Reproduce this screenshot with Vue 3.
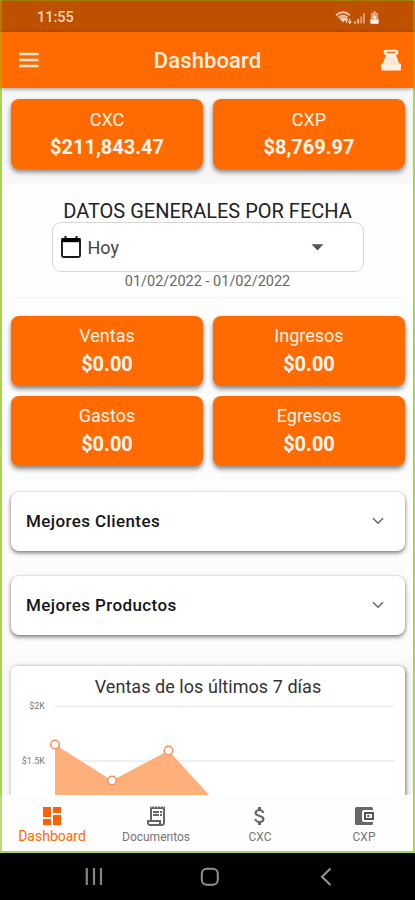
<script setup>
const totals = [
  { label: 'CXC', value: '$211,843.47' },
  { label: 'CXP', value: '$8,769.97' },
]
const periodTotals = [
  { label: 'Ventas', value: '$0.00' },
  { label: 'Ingresos', value: '$0.00' },
  { label: 'Gastos', value: '$0.00' },
  { label: 'Egresos', value: '$0.00' },
]
const panels = ['Mejores Clientes', 'Mejores Productos']
const points = [
  [44, 39.5],
  [101, 75.5],
  [157.5, 45.5],
]
</script>

<template>
  <div class="phone">
    <div class="screen">
      <div class="status">
        <span class="time">11:55</span>
        <svg class="signals" width="46" height="16" viewBox="0 0 46 16">
          <path d="M1 5.2Q8 -.8 15 5.2M3.2 7.6Q8 3.8 12.6 7.6" fill="none" stroke="#f0c3a8" stroke-width="1.8" />
          <path d="M4.5 8.4Q8 6 11.5 8.4L8 12.5Z" fill="#f5cdb5" />
          <path d="M11.5 13V9M10 10.5l1.5-2 1.5 2M14.8 8.5v4.3M13.3 11.3l1.5 2 1.5-2" fill="none" stroke="#f5cdb5" stroke-width="1.2" />
          <path d="M19 13.5v-2h2v2zM22.2 13.5V9.2h2v4.3z" fill="#f0c3a8" />
          <path d="M25.2 13.5v-7h2v7zM28 13.5V3.2h2v10.3z" fill="#db9a73" />
          <path d="M38 1.2h3v1.5h1.2q1 0 1 1v9q0 1-1 1h-5.400q-1 0-1-1v-9q0-1 1-1H38z" fill="#dc9d76" />
          <path d="M35.3 9.5h8.400v3.200q0 1-1 1h-6.400q-1 0-1-1z" fill="#fff0e5" />
          <path d="M40 3.800l-2.500 4h2l-.7 3 3-4h-2z" fill="#fff" />
        </svg>
      </div>

      <header class="appbar">
        <svg class="menu" width="20" height="16" viewBox="0 0 20 16">
          <path d="M0 2h19.5M0 8h19.5M0 14h19.5" stroke="#ffe9d7" stroke-width="2.3" />
        </svg>
        <h1>Dashboard</h1>
        <svg class="register" width="22" height="22" viewBox="0 0 22 22">
          <path fill-rule="evenodd" d="M5.500 .8h11q1.800 0 1.800 1.800v1.600Q18.300 6 16.500 6h-.6l3.400 9H2.700l3.400-9h-.6Q3.700 6 3.700 4.200V2.600Q3.700 .8 5.500 .8zM6.500 2.800v1.200h9V2.800z" fill="#fff0e3" />
          <path d="M2 14.500h18q1 0 1 1v5q0 1-1 1H2q-1 0-1-1v-5q0-1 1-1z" fill="#fff0e3" />
          <path d="M8.500 8.500l-.8 7M13.500 8.500l.8 7M11 10v4.500h2" stroke="#ffd0ac" stroke-width=".9" fill="none" />
        </svg>
      </header>

      <main>
        <section class="tiles">
          <div v-for="t in totals" :key="t.label" class="tile">
            <span class="label">{{ t.label }}</span>
            <strong>{{ t.value }}</strong>
          </div>
        </section>

        <section class="period">
          <h2>DATOS GENERALES POR FECHA</h2>
          <div class="select">
            <svg width="22" height="24" viewBox="0 0 22 24">
              <path d="M5.500 1v4M16.500 1v4" stroke="#1a1a1a" stroke-width="2" />
              <rect x="2" y="4" width="18" height="18" rx="1.500" fill="none" stroke="#1a1a1a" stroke-width="1.900" />
              <path d="M1.500 3.200h19v4h-19z" fill="#000" />
            </svg>
            <span class="choice">Hoy</span>
            <svg class="arrow" width="13" height="7" viewBox="0 0 13 7">
              <path d="M.5 .3h12L6.500 6.500z" fill="#555" />
            </svg>
          </div>
          <p>01/02/2022 - 01/02/2022</p>
        </section>

        <section class="tiles period-tiles">
          <div v-for="t in periodTotals" :key="t.label" class="tile">
            <span class="label">{{ t.label }}</span>
            <strong>{{ t.value }}</strong>
          </div>
        </section>

        <section class="panels">
          <div v-for="p in panels" :key="p" class="panel">
            <span>{{ p }}</span>
            <svg width="12" height="8" viewBox="0 0 12 8">
              <path d="M1 1.200l5 5 5-5" fill="none" stroke="#666" stroke-width="1.600" />
            </svg>
          </div>
        </section>

        <section class="chart">
          <h3>Ventas de los últimos 7 días</h3>
          <div class="plot">
            <div class="axis"><span>$2K</span><span>$1.5K</span></div>
            <svg width="395" height="92" viewBox="0 0 395 92">
              <path d="M44 1.500h339M44 56h339" stroke="#ececec" stroke-width="1.300" />
              <path d="M44 39.500L101 75.500L157.500 45.500L200 92H44z" fill="#ffb07a" />
              <circle v-for="p in points" :key="p[0]" :cx="p[0]" :cy="p[1]" r="4.300" fill="#fff" stroke="#f58e5b" stroke-width="1.500" />
            </svg>
          </div>
        </section>
      </main>

      <nav>
        <a class="active">
          <svg width="24" height="24" viewBox="0 0 24 24"><path d="M3 13h8V3H3v10zm0 8h8v-6H3v6zm10 0h8V11h-8v10zm0-18v6h8V3h-8z" fill="#ff6000" /></svg>
          <span>Dashboard</span>
        </a>
        <a>
          <svg width="24" height="24" viewBox="0 0 24 24"><path d="M19.500 3.500L18 2l-1.500 1.500L15 2l-1.500 1.500L12 2l-1.500 1.500L9 2 7.500 3.500 6 2v14H3v3c0 1.660 1.340 3 3 3h12c1.660 0 3-1.340 3-3V2l-1.500 1.500zM15 20H6c-.55 0-1-.45-1-1v-1h10v2zm4-1c0 .55-.45 1-1 1s-1-.45-1-1v-3H8V5h11v14zM9 7h6v2H9zm7 0h2v2h-2zm-7 3h6v2H9zm7 0h2v2h-2z" fill="#666" /></svg>
          <span>Documentos</span>
        </a>
        <a>
          <svg width="24" height="24" viewBox="0 0 24 24"><path d="M11.800 10.900c-2.270-.59-3-1.200-3-2.150 0-1.090 1.010-1.850 2.700-1.850 1.780 0 2.440.85 2.500 2.100h2.210c-.07-1.720-1.120-3.300-3.210-3.810V3h-3v2.160c-1.940.42-3.500 1.680-3.500 3.610 0 2.310 1.910 3.460 4.700 4.130 2.500.6 3 1.480 3 2.410 0 .69-.49 1.790-2.700 1.790-2.060 0-2.870-.92-2.980-2.100h-2.200c.12 2.190 1.760 3.420 3.680 3.830V21h3v-2.150c1.950-.37 3.500-1.500 3.500-3.550 0-2.840-2.430-3.810-4.700-4.400z" fill="#666" /></svg>
          <span>CXC</span>
        </a>
        <a>
          <svg width="24" height="24" viewBox="0 0 24 24"><path d="M4.500 3h15q1.500 0 1.500 1.500V6h-9q-2 0-2 2v8q0 2 2 2h9v1.500q0 1.500-1.500 1.500h-15q-1.500 0-1.500-1.500v-15Q3 3 4.500 3z" fill="#666" /><path fill-rule="evenodd" d="M12 8h10v8H12zM14 10v4h6v-4zM15.300 11h2v2h-2z" fill="#555" /></svg>
          <span>CXP</span>
        </a>
      </nav>
    </div>

    <div class="system">
      <svg width="20" height="20" viewBox="0 0 20 20"><path d="M2.800 1v17M10 1v17M17 1v17" stroke="#858585" stroke-width="2.200" /></svg>
      <svg width="20" height="20" viewBox="0 0 20 20"><rect x="1.800" y="1.800" width="16" height="16" rx="5" fill="none" stroke="#929292" stroke-width="2" /></svg>
      <svg width="20" height="20" viewBox="0 0 20 20"><path d="M14.500 1.500L6 9.800l8.500 8.300" fill="none" stroke="#929292" stroke-width="2.100" /></svg>
    </div>
  </div>
</template>

<style>
body { margin: 0; overflow: hidden; }
</style>

<style scoped>
* { box-sizing: border-box; }
h1, h2, h3, p { margin: 0; font-weight: 400; white-space: nowrap; }
svg { display: block; flex: none; }
.phone { width: 415px; height: 900px; display: flex; flex-direction: column; background: #000; font-family: Roboto, sans-serif; overflow: hidden; }
.screen { height: 853px; display: flex; flex-direction: column; border: solid #a9d548; border-width: 1px 2px 2px; border-top-color: #a47d00; background: #fdfcfc; }
.status { height: 31px; flex: none; display: flex; align-items: center; justify-content: space-between; padding: 2px 32px 0 35px; background: #bd5100; color: #f7d6c1; box-shadow: -2px 0 #b07d00, 2px 0 #b07d00; }
.time { font-size: 14.5px; font-weight: 500; }
.appbar { height: 56px; flex: none; position: relative; z-index: 1; display: flex; align-items: center; justify-content: space-between; padding: 0 11px 0 17px; background: #ff6b00; box-shadow: -2px 0 #d19400, 2px 0 #d19400, 0 1px 4px rgba(0, 0, 0, .4); }
.appbar h1 { color: #fff0e3; font-size: 22px; font-weight: 500; letter-spacing: .1px; padding-right: 4px; }
main { height: 707px; flex: none; overflow: hidden; display: flex; flex-direction: column; padding: 11px 8px 0 9px; background: linear-gradient(#f8f7f7 0, #f8f7f7 92px, #fefefe 100px, #fdfcfc 560px, #f8f7f7 590px); }
.tiles { display: grid; grid-template-columns: 1fr 1fr; gap: 10px; flex: none; }
.tile { height: 70px; border-radius: 8px; background: #ff6b00; color: #fff1e5; display: flex; flex-direction: column; align-items: center; box-shadow: 0 3px 5px rgba(0, 0, 0, .48); padding-top: 9px; }
.label { font-size: 18px; line-height: 23px; }
.tile strong { font-size: 20px; line-height: 27px; padding-top: 3px; font-weight: 700; color: #fff6ef; }
.period-tiles .tile { padding-top: 8px; }
.period-tiles strong { padding-top: 4px; }
.period { height: 129px; margin: 0 0 18px; padding: 31px 1px 0 0; flex: none; display: flex; flex-direction: column; align-items: center; border-bottom: 1px solid #f2f2f2; }
.period h2 { font-size: 20px; line-height: 22px; color: #222; }
.select { width: 312px; height: 50px; flex: none; border: 1px solid #d6d6d6; border-radius: 9px; background: #fff; display: flex; align-items: center; padding: 0 39px 0 7px; }
.choice { font-size: 18px; color: #444; margin-left: 6px; flex: 1; }
.period p { font-size: 14.5px; line-height: 18px; color: #666; padding-top: 1px; }
.panels { display: flex; flex-direction: column; gap: 25px; padding-top: 26px; flex: none; }
.panel { height: 59px; border-radius: 8px; background: #fff; display: flex; align-items: center; justify-content: space-between; padding: 0 21px 1px 15px; font-size: 17px; letter-spacing: .4px; font-weight: 500; color: #151515; box-shadow: 0 2px 4px rgba(0, 0, 0, .5), 0 0 2px rgba(0, 0, 0, .15); }
.chart { height: 150px; margin-top: 31px; flex: none; border-radius: 6px; background: #fff; box-shadow: 1px 1px 4px rgba(0, 0, 0, .5); }
.chart h3 { text-align: center; font-size: 18px; letter-spacing: .05px; line-height: 22px; padding-top: 10px; color: #333; }
.plot { display: grid; padding-top: 7px; }
.plot > * { grid-area: 1 / 1; }
.axis { width: 34px; display: flex; flex-direction: column; align-items: flex-end; gap: 45px; font-size: 9px; line-height: 10px; color: #777; margin-top: -4px; }
nav { height: 56px; flex: none; display: grid; grid-template-columns: repeat(4, 104px); margin-left: -2px; background: #fefefe; border-left: 2px solid #b9dc78; padding-top: 9px; }
nav a { display: flex; flex-direction: column; align-items: center; color: #757575; font-size: 12px; line-height: 14px; margin-left: -2px; margin-right: 2px; }
nav span { padding-top: 2px; }
nav .active { color: #ff6b00; font-size: 14px; }
nav .active span { padding-top: 1px; }
.system { flex: 1; display: grid; grid-template-columns: repeat(3, 116px); justify-content: center; justify-items: center; align-items: center; padding-left: 5px; }
</style>
